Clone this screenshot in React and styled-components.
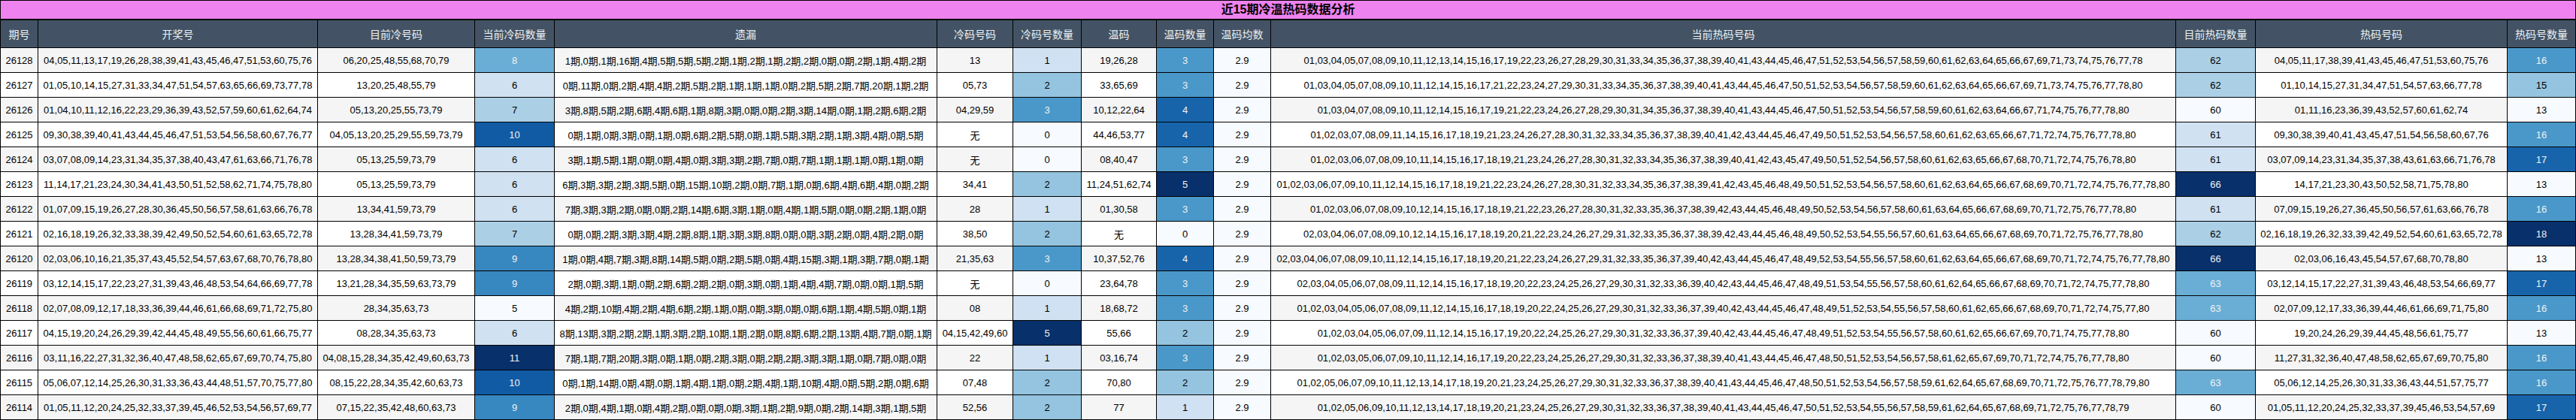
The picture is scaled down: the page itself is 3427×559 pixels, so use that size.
import React from 'react';
import styled, { createGlobalStyle } from 'styled-components';

const GlobalStyle = createGlobalStyle`
    html, body {
        margin: 0;
        padding: 0;
        background: #fff;
    }
    body {
        font-family: "Liberation Sans", "Noto Sans CJK SC", sans-serif;
    }
`;

// pandas style Blues gradient, one lookup for each value range
const coldScale = { 5: '#f7fbff', 6: '#d0e1f2', 7: '#abd0e6', 8: '#6aaed6', 9: '#3787c0', 10: '#105ba4', 11: '#08306b' };
const smallScale = { 0: '#f7fbff', 1: '#cfe1f2', 2: '#94c4df', 3: '#4a98c9', 4: '#1764ab', 5: '#08306b' };
const hotScale = { 60: '#f7fbff', 61: '#d0e1f2', 62: '#abd0e6', 63: '#6aaed6', 66: '#08306b' };
const hotHitScale = { 13: '#f7fbff', 15: '#94c4df', 16: '#4a98c9', 17: '#1764ab', 18: '#08306b' };
const lightText = ['#6aaed6', '#3787c0', '#105ba4', '#08306b', '#4a98c9', '#1764ab'];

const columns = [
    { name: '期号', width: 50 },
    { name: '开奖号', width: 372 },
    { name: '目前冷号码', width: 209 },
    { name: '当前冷码数量', width: 106 },
    { name: '遗漏', width: 509 },
    { name: '冷码号码', width: 101 },
    { name: '冷码号数量', width: 91 },
    { name: '温码', width: 100 },
    { name: '温码数量', width: 76 },
    { name: '温码均数', width: 76 },
    { name: '当前热码号码', width: 1204 },
    { name: '目前热码数量', width: 106 },
    { name: '热码号码', width: 335 },
    { name: '热码号数量', width: 91 },
];

const rows = [
    ['26128', '04,05,11,13,17,19,26,28,38,39,41,43,45,46,47,51,53,60,75,76', '06,20,25,48,55,68,70,79', 8, '1期,0期,1期,16期,4期,5期,5期,5期,2期,1期,2期,1期,2期,2期,0期,0期,2期,1期,4期,2期', '13', 1, '19,26,28', 3, '01,03,04,05,07,08,09,10,11,12,13,14,15,16,17,19,22,23,26,27,28,29,30,31,33,34,35,36,37,38,39,40,41,43,44,45,46,47,51,52,53,54,56,57,58,59,60,61,62,63,64,65,66,67,69,71,73,74,75,76,77,78', 62, '04,05,11,17,38,39,41,43,45,46,47,51,53,60,75,76', 16],
    ['26127', '01,05,10,14,15,27,31,33,34,47,51,54,57,63,65,66,69,73,77,78', '13,20,25,48,55,79', 6, '0期,11期,0期,2期,4期,4期,2期,5期,2期,1期,1期,1期,0期,2期,5期,2期,7期,20期,1期,2期', '05,73', 2, '33,65,69', 3, '01,03,04,05,07,08,09,10,11,12,14,15,16,17,21,22,23,24,27,29,30,31,33,34,35,36,37,38,39,40,41,43,44,45,46,47,50,51,52,53,54,56,57,58,59,60,61,62,63,64,65,66,67,69,71,73,74,75,76,77,78,80', 62, '01,10,14,15,27,31,34,47,51,54,57,63,66,77,78', 15],
    ['26126', '01,04,10,11,12,16,22,23,29,36,39,43,52,57,59,60,61,62,64,74', '05,13,20,25,55,73,79', 7, '3期,8期,5期,2期,6期,4期,6期,1期,8期,3期,0期,0期,2期,3期,14期,0期,1期,2期,6期,2期', '04,29,59', 3, '10,12,22,64', 4, '01,03,04,07,08,09,10,11,12,14,15,16,17,19,21,22,23,24,26,27,28,29,30,31,34,35,36,37,38,39,40,41,43,44,45,46,47,50,51,52,53,54,56,57,58,59,60,61,62,63,64,66,67,71,74,75,76,77,78,80', 60, '01,11,16,23,36,39,43,52,57,60,61,62,74', 13],
    ['26125', '09,30,38,39,40,41,43,44,45,46,47,51,53,54,56,58,60,67,76,77', '04,05,13,20,25,29,55,59,73,79', 10, '0期,1期,0期,3期,0期,1期,0期,6期,2期,5期,0期,1期,5期,3期,2期,1期,3期,4期,0期,5期', '无', 0, '44,46,53,77', 4, '01,02,03,07,08,09,11,14,15,16,17,18,19,21,23,24,26,27,28,30,31,32,33,34,35,36,37,38,39,40,41,42,43,44,45,46,47,49,50,51,52,53,54,56,57,58,60,61,62,63,65,66,67,71,72,74,75,76,77,78,80', 61, '09,30,38,39,40,41,43,45,47,51,54,56,58,60,67,76', 16],
    ['26124', '03,07,08,09,14,23,31,34,35,37,38,40,43,47,61,63,66,71,76,78', '05,13,25,59,73,79', 6, '3期,1期,5期,1期,0期,0期,4期,0期,3期,3期,2期,7期,0期,7期,1期,1期,1期,0期,1期,0期', '无', 0, '08,40,47', 3, '01,02,03,06,07,08,09,10,11,14,15,16,17,18,19,21,23,24,26,27,28,30,31,32,33,34,35,36,37,38,39,40,41,42,43,45,47,49,50,51,52,54,56,57,58,60,61,62,63,65,66,67,68,70,71,72,74,75,76,78,80', 61, '03,07,09,14,23,31,34,35,37,38,43,61,63,66,71,76,78', 17],
    ['26123', '11,14,17,21,23,24,30,34,41,43,50,51,52,58,62,71,74,75,78,80', '05,13,25,59,73,79', 6, '6期,3期,3期,2期,3期,5期,0期,15期,10期,2期,0期,7期,1期,0期,6期,4期,6期,4期,0期,2期', '34,41', 2, '11,24,51,62,74', 5, '01,02,03,06,07,09,10,11,12,14,15,16,17,18,19,21,22,23,24,26,27,28,30,31,32,33,34,35,36,37,38,39,41,42,43,45,46,48,49,50,51,52,53,54,56,57,58,60,61,62,63,64,65,66,67,68,69,70,71,72,74,75,76,77,78,80', 66, '14,17,21,23,30,43,50,52,58,71,75,78,80', 13],
    ['26122', '01,07,09,15,19,26,27,28,30,36,45,50,56,57,58,61,63,66,76,78', '13,34,41,59,73,79', 6, '7期,3期,3期,2期,0期,0期,2期,14期,6期,3期,1期,0期,4期,1期,5期,0期,0期,2期,1期,0期', '28', 1, '01,30,58', 3, '01,02,03,06,07,08,09,10,12,14,15,16,17,18,19,21,22,23,26,27,28,30,31,32,33,35,36,37,38,39,42,43,44,45,46,48,49,50,52,53,54,56,57,58,60,61,63,64,65,66,67,68,69,70,71,72,75,76,77,78,80', 61, '07,09,15,19,26,27,36,45,50,56,57,61,63,66,76,78', 16],
    ['26121', '02,16,18,19,26,32,33,38,39,42,49,50,52,54,60,61,63,65,72,78', '13,28,34,41,59,73,79', 7, '0期,0期,2期,3期,3期,4期,2期,8期,1期,3期,3期,8期,0期,0期,3期,2期,0期,4期,2期,0期', '38,50', 2, '无', 0, '02,03,04,06,07,08,09,10,12,14,15,16,17,18,19,20,21,22,23,24,26,27,29,31,32,33,35,36,37,38,39,42,43,44,45,46,48,49,50,52,53,54,55,56,57,60,61,63,64,65,66,67,68,69,70,71,72,75,76,77,78,80', 62, '02,16,18,19,26,32,33,39,42,49,52,54,60,61,63,65,72,78', 18],
    ['26120', '02,03,06,10,16,21,35,37,43,45,52,54,57,63,67,68,70,76,78,80', '13,28,34,38,41,50,59,73,79', 9, '1期,0期,4期,7期,3期,8期,14期,5期,0期,2期,5期,0期,4期,15期,3期,1期,3期,7期,0期,1期', '21,35,63', 3, '10,37,52,76', 4, '02,03,04,06,07,08,09,10,11,12,14,15,16,17,18,19,20,21,22,23,24,26,27,29,31,32,33,35,36,37,39,40,42,43,44,45,46,47,48,49,52,53,54,55,56,57,58,60,61,62,63,64,65,66,67,68,69,70,71,72,74,75,76,77,78,80', 66, '02,03,06,16,43,45,54,57,67,68,70,78,80', 13],
    ['26119', '03,12,14,15,17,22,23,27,31,39,43,46,48,53,54,64,66,69,77,78', '13,21,28,34,35,59,63,73,79', 9, '2期,0期,3期,1期,0期,2期,6期,2期,2期,0期,3期,0期,1期,4期,4期,7期,0期,0期,1期,5期', '无', 0, '23,64,78', 3, '02,03,04,05,06,07,08,09,11,12,14,15,16,17,18,19,20,22,23,24,25,26,27,29,30,31,32,33,36,39,40,42,43,44,45,46,47,48,49,51,53,54,55,56,57,58,60,61,62,64,65,66,67,68,69,70,71,72,74,75,77,78,80', 63, '03,12,14,15,17,22,27,31,39,43,46,48,53,54,66,69,77', 17],
    ['26118', '02,07,08,09,12,17,18,33,36,39,44,46,61,66,68,69,71,72,75,80', '28,34,35,63,73', 5, '4期,2期,10期,4期,2期,4期,6期,2期,1期,0期,0期,3期,0期,0期,6期,1期,4期,5期,0期,1期', '08', 1, '18,68,72', 3, '01,02,03,04,05,06,07,08,09,11,12,14,15,16,17,18,19,20,22,24,25,26,27,29,30,31,32,33,36,37,39,40,42,43,44,45,46,47,48,49,51,52,53,54,55,56,57,58,60,61,62,65,66,67,68,69,70,71,72,74,75,77,80', 63, '02,07,09,12,17,33,36,39,44,46,61,66,69,71,75,80', 16],
    ['26117', '04,15,19,20,24,26,29,39,42,44,45,48,49,55,56,60,61,66,75,77', '08,28,34,35,63,73', 6, '8期,13期,3期,2期,2期,1期,3期,2期,10期,1期,2期,0期,8期,6期,2期,13期,4期,7期,0期,1期', '04,15,42,49,60', 5, '55,66', 2, '01,02,03,04,05,06,07,09,11,12,14,15,16,17,19,20,22,24,25,26,27,29,30,31,32,33,36,37,39,40,42,43,44,45,46,47,48,49,51,52,53,54,55,56,57,58,60,61,62,65,66,67,69,70,71,74,75,77,78,80', 60, '19,20,24,26,29,39,44,45,48,56,61,75,77', 13],
    ['26116', '03,11,16,22,27,31,32,36,40,47,48,58,62,65,67,69,70,74,75,80', '04,08,15,28,34,35,42,49,60,63,73', 11, '7期,1期,7期,20期,3期,0期,1期,0期,2期,3期,0期,2期,2期,3期,3期,1期,0期,7期,0期,0期', '22', 1, '03,16,74', 3, '01,02,03,05,06,07,09,10,11,12,14,16,17,19,20,22,23,24,25,26,27,29,30,31,32,33,36,37,38,39,40,41,43,44,45,46,47,48,50,51,52,53,54,56,57,58,61,62,65,67,69,70,71,72,74,75,76,77,78,80', 60, '11,27,31,32,36,40,47,48,58,62,65,67,69,70,75,80', 16],
    ['26115', '05,06,07,12,14,25,26,30,31,33,36,43,44,48,51,57,70,75,77,80', '08,15,22,28,34,35,42,60,63,73', 10, '0期,1期,14期,0期,4期,0期,1期,4期,1期,0期,2期,4期,1期,10期,4期,0期,5期,2期,0期,6期', '07,48', 2, '70,80', 2, '01,02,05,06,07,09,10,11,12,13,14,17,18,19,20,21,23,24,25,26,27,29,30,31,32,33,36,37,38,39,40,41,43,44,45,46,47,48,50,51,52,53,54,56,57,58,59,61,62,64,65,67,68,69,70,71,72,75,76,77,78,79,80', 63, '05,06,12,14,25,26,30,31,33,36,43,44,51,57,75,77', 16],
    ['26114', '01,05,11,12,20,24,25,32,33,37,39,45,46,52,53,54,56,57,69,77', '07,15,22,35,42,48,60,63,73', 9, '2期,0期,4期,1期,0期,4期,2期,0期,0期,0期,3期,1期,2期,9期,0期,2期,14期,3期,1期,5期', '52,56', 2, '77', 1, '01,02,05,06,09,10,11,12,13,14,17,18,19,20,21,23,24,25,26,27,29,30,31,32,33,36,37,38,39,40,41,43,44,45,46,47,50,51,52,53,54,55,56,57,58,59,61,62,64,65,67,68,69,71,72,75,76,77,78,79', 60, '01,05,11,12,20,24,25,32,33,37,39,45,46,53,54,57,69', 17],
];

function HeatValue({ value, scale }) {
    const bg = scale[value];
    return <HeatCell $bg={bg} $light={lightText.includes(bg)}>{value}</HeatCell>;
}

export default function App() {
    return (
        <>
            <GlobalStyle />
            <Sheet>
                <colgroup>
                    {columns.map((col) => <Column key={col.name} $width={col.width} />)}
                </colgroup>
                <thead>
                    <tr>
                        <TitleCell colSpan={columns.length}>近15期冷温热码数据分析</TitleCell>
                    </tr>
                    <tr>
                        {columns.map((col) => <HeadCell key={col.name}>{col.name}</HeadCell>)}
                    </tr>
                </thead>
                <tbody>
                    {rows.map((row) => (
                        <DataRow key={row[0]}>
                            <Cell>{row[0]}</Cell>
                            <Cell>{row[1]}</Cell>
                            <Cell>{row[2]}</Cell>
                            <HeatValue value={row[3]} scale={coldScale} />
                            <Cell>{row[4]}</Cell>
                            <Cell>{row[5]}</Cell>
                            <HeatValue value={row[6]} scale={smallScale} />
                            <Cell>{row[7]}</Cell>
                            <HeatValue value={row[8]} scale={smallScale} />
                            <HeatCell $bg="#f7fbff">2.9</HeatCell>
                            <Cell>{row[9]}</Cell>
                            <HeatValue value={row[10]} scale={hotScale} />
                            <Cell>{row[11]}</Cell>
                            <HeatValue value={row[12]} scale={hotHitScale} />
                        </DataRow>
                    ))}
                </tbody>
            </Sheet>
        </>
    );
}

const Sheet = styled.table`
    border-collapse: collapse;
    table-layout: fixed;
    width: 3427px;
    white-space: nowrap;
    font-size: 13px;
    color: #000;
`;

const Column = styled.col`
    width: ${(props) => props.$width}px;
`;

const TitleCell = styled.th`
    height: 24px;
    padding: 0;
    border: 1px solid #000;
    border-bottom: 2px solid #000;
    background: #ee82ee;
    font-size: 16px;
    font-weight: bold;
    line-height: 20px;
    text-align: center;
`;

const HeadCell = styled.th`
    height: 36px;
    padding: 0;
    border: 1px solid #000;
    background: #435365;
    color: #ecf0f1;
    font-size: 14px;
    font-weight: normal;
    text-align: center;
`;

const DataRow = styled.tr`
    background: #fff;
    &:nth-child(odd) {
        background: #f5f5f5;
    }
`;

const Cell = styled.td`
    height: 32px;
    padding: 0;
    border: 1px solid #000;
    text-align: center;
`;

const HeatCell = styled(Cell)`
    background: ${(props) => props.$bg};
    color: ${(props) => (props.$light ? '#f1f1f1' : '#000')};
`;
